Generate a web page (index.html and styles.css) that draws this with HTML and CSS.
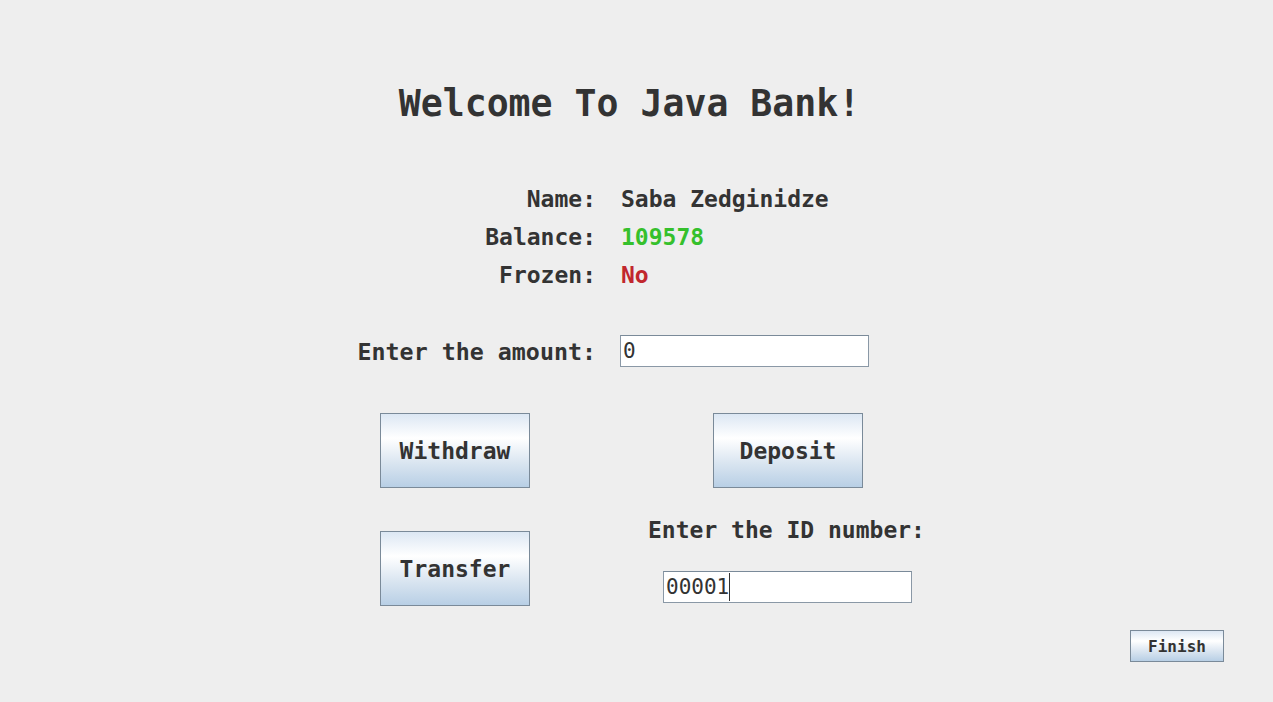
FILE: index.html
```html
<!DOCTYPE html>
<html>
<head>
<meta charset="utf-8">
<link rel="stylesheet" href="styles.css">
</head>
<body>
<div class="app">
  <h1 class="title">Welcome To Java Bank!</h1>
  <div class="info">
    <div class="label">Name:</div><div class="value">Saba Zedginidze</div>
    <div class="label">Balance:</div><div class="value green">109578</div>
    <div class="label">Frozen:</div><div class="value red">No</div>
  </div>
  <div class="amount">
    <div class="label">Enter the amount:</div>
    <div class="field amount-field">0</div>
  </div>
  <div class="actions">
    <div class="col-left">
      <button class="btn">Withdraw</button>
      <button class="btn transfer">Transfer</button>
    </div>
    <div class="col-right">
      <button class="btn">Deposit</button>
      <div class="id-label">Enter the ID number:</div>
      <div class="field id-field">00001<span class="caret"></span></div>
    </div>
  </div>
  <div class="footer">
    <button class="btn small">Finish</button>
  </div>
</div>
</body>
</html>
```
FILE: styles.css
```css
html, body {
  margin: 0;
  padding: 0;
  background: #eeeeee;
}
.app {
  width: 1273px;
  height: 702px;
  font-family: "DejaVu Sans Mono", "Liberation Mono", monospace;
  color: #333333;
  box-sizing: border-box;
  padding-top: 82px;
}
.title {
  margin: 0;
  font-size: 36.5px;
  line-height: 44px;
  font-weight: bold;
  text-align: center;
  padding-right: 14px;
}
.info {
  display: grid;
  grid-template-columns: 596px 1fr;
  column-gap: 25px;
  margin-top: 54px;
  font-size: 23px;
  font-weight: bold;
}
.info > div {
  line-height: 38px;
}
.label {
  text-align: right;
  font-weight: bold;
}
.value.green { color: #35c02c; }
.value.red { color: #c1272d; }
.amount {
  display: grid;
  grid-template-columns: 596px 249px;
  column-gap: 24px;
  align-items: center;
  margin-top: 41px;
  font-size: 23px;
}
.amount .label {
  font-size: 23.3px;
}
.field {
  height: 32px;
  box-sizing: border-box;
  background: #ffffff;
  border: 1px solid #8a98a6;
  border-top-color: #7a8a99;
  font-size: 21px;
  line-height: 30px;
  padding-left: 2px;
  color: #333333;
  display: flex;
  align-items: center;
}
.actions {
  display: flex;
  margin-top: 46px;
  padding-left: 380px;
}
.col-left {
  display: flex;
  flex-direction: column;
  gap: 43px;
  width: 150px;
}
.col-right {
  display: flex;
  flex-direction: column;
  margin-left: 183px;
  width: 216px;
}
.btn {
  width: 150px;
  height: 75px;
  box-sizing: border-box;
  border: 1px solid #7a8a99;
  background: linear-gradient(to bottom, #dce7f3 0%, #ffffff 33%, #dbe6f1 66%, #b8cfe5 100%);
  font-family: "DejaVu Sans Mono", "Liberation Mono", monospace;
  font-weight: bold;
  font-size: 23px;
  color: #333333;
  padding: 0;
  margin: 0;
}
.id-label {
  font-size: 23px;
  font-weight: bold;
  white-space: nowrap;
  margin-left: -65px;
  margin-top: 27px;
  line-height: 30px;
}
.id-field {
  width: 249px;
  margin-left: -50px;
  margin-top: 26px;
}
.caret {
  display: inline-block;
  width: 1px;
  height: 28px;
  background: #333333;
}
.footer {
  display: flex;
  justify-content: flex-end;
  padding-right: 49px;
  margin-top: 24px;
}
.btn.small {
  width: 94px;
  height: 32px;
  font-size: 16px;
}
```
